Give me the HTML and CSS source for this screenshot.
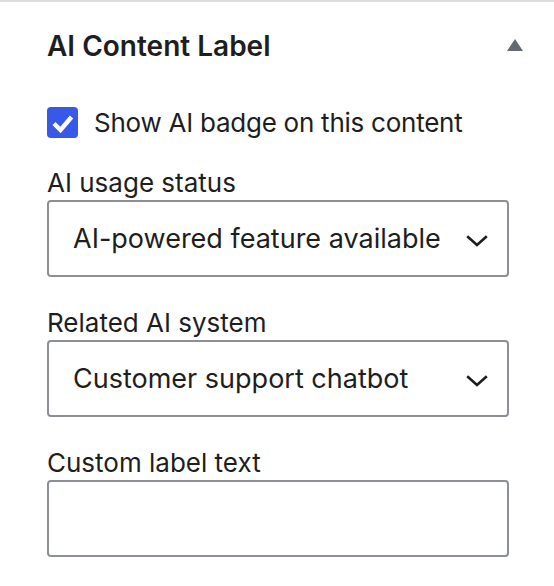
FILE: index.html
```html
<!DOCTYPE html>
<html lang="en">
<head>
<meta charset="utf-8">
<title>AI Content Label</title>
<link rel="stylesheet" href="styles.css">
</head>
<body>
<section class="panel">
  <header class="panel-header">
    <h2 class="panel-title">AI Content Label</h2>
    <span class="toggle" aria-hidden="true">
      <svg width="16" height="12" viewBox="0 0 16 12"><polygon points="8,0 16,12 0,12" fill="currentColor"/></svg>
    </span>
  </header>
  <div class="panel-body">
    <label class="check-row">
      <span class="checkbox">
        <svg width="31" height="31" viewBox="0 0 31 31"><polyline points="7,16.5 13.5,23 24.5,10" fill="none" stroke="#fff" stroke-width="4.4" stroke-linecap="butt" stroke-linejoin="miter"/></svg>
      </span>
      <span class="check-text">Show AI badge on this content</span>
    </label>

    <div class="field">
      <label class="field-label">AI usage status</label>
      <div class="select-wrap">
        <select class="select">
          <option>AI-powered feature available</option>
        </select>
        <svg class="chevron" width="22" height="12" viewBox="0 0 22 12"><polyline points="1.2,1.2 11,10 20.8,1.2" fill="none" stroke="#1e1e1e" stroke-width="2.6"/></svg>
      </div>
    </div>

    <div class="field">
      <label class="field-label">Related AI system</label>
      <div class="select-wrap">
        <select class="select">
          <option>Customer support chatbot</option>
        </select>
        <svg class="chevron" width="22" height="12" viewBox="0 0 22 12"><polyline points="1.2,1.2 11,10 20.8,1.2" fill="none" stroke="#1e1e1e" stroke-width="2.6"/></svg>
      </div>
    </div>

    <div class="field">
      <label class="field-label">Custom label text</label>
      <input class="text-input" type="text">
    </div>
  </div>
</section>
</body>
</html>
```

FILE: styles.css
```css
html, body {
  margin: 0;
  padding: 0;
  background: #fff;
}

body {
  font-family: Inter, "Noto Sans", "Liberation Sans", sans-serif;
  color: #1e1e1e;
  font-size: 26px;
}

.panel {
  border-top: 2px solid #dcdcde;
  padding: 0 31px 0 47px;
}

.panel-header {
  display: flex;
  align-items: center;
  justify-content: space-between;
  padding-top: 28px;
  height: 32px;
}

.panel-title {
  margin: 0;
  font-size: 28px;
  line-height: 32px;
  font-weight: 600;
  color: #1e1e1e;
}

.toggle {
  display: flex;
  color: #646970;
  margin-top: -3px;
}

.panel-body {
  padding-top: 45px;
  padding-right: 14px;
}

.check-row {
  display: flex;
  align-items: center;
  gap: 16px;
  height: 31px;
}

.checkbox {
  display: block;
  width: 31px;
  height: 31px;
  border-radius: 4px;
  background: #3858e9;
}

.checkbox svg {
  display: block;
}

.check-text {
  line-height: 32px;
  letter-spacing: -0.25px;
}

.field {
  margin-top: 29px;
}

.field + .field {
  margin-top: 30px;
}

.field-label {
  display: block;
  line-height: 32px;
  margin-bottom: 1px;
}

.select-wrap {
  position: relative;
}

.select {
  display: block;
  width: 100%;
  height: 77px;
  box-sizing: border-box;
  appearance: none;
  -webkit-appearance: none;
  border: 2px solid #8c8f94;
  border-radius: 4px;
  background: #fff;
  font-family: inherit;
  font-size: 27px;
  color: #1e1e1e;
  padding: 0 60px 0 24px;
}

.chevron {
  position: absolute;
  right: 21px;
  top: 35px;
  pointer-events: none;
}

.text-input {
  display: block;
  width: 100%;
  height: 77px;
  box-sizing: border-box;
  border: 2px solid #8c8f94;
  border-radius: 4px;
  background: #fff;
  font-family: inherit;
  font-size: 26px;
  padding: 0 24px;
}
```
